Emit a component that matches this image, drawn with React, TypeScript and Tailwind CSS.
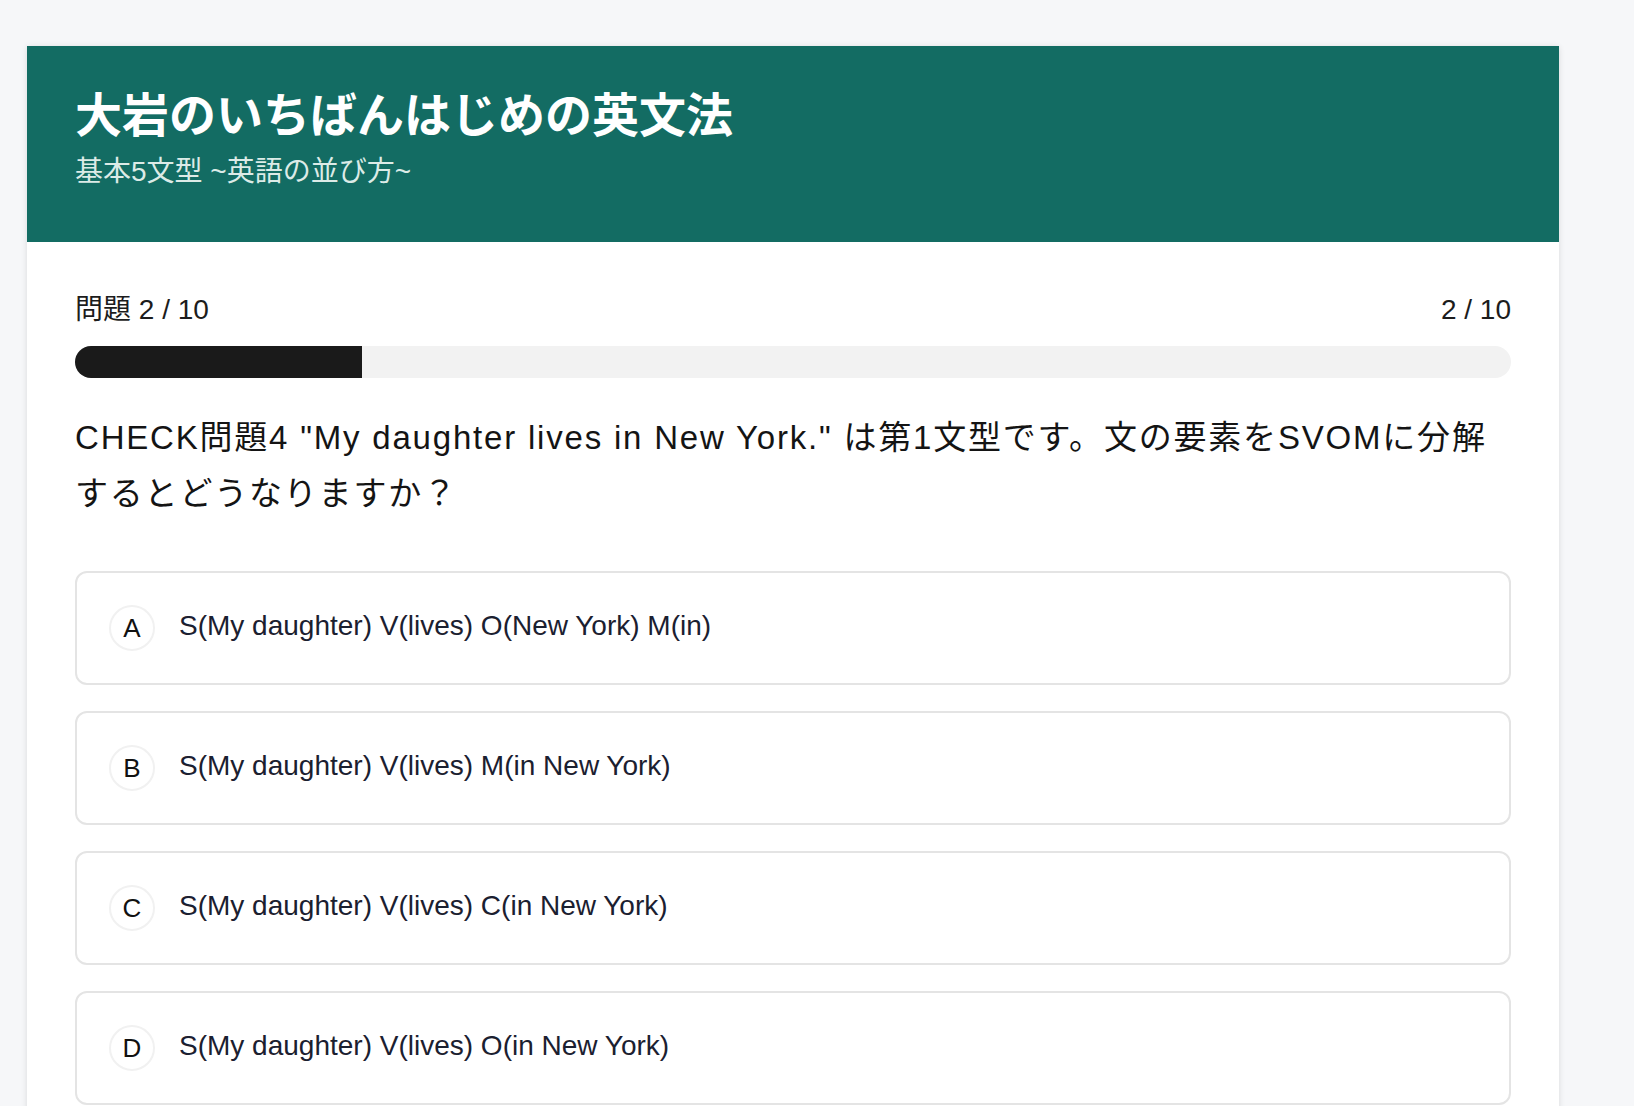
const options = [
  { key: "A", text: "S(My daughter) V(lives) O(New York) M(in)" },
  { key: "B", text: "S(My daughter) V(lives) M(in New York)" },
  { key: "C", text: "S(My daughter) V(lives) C(in New York)" },
  { key: "D", text: "S(My daughter) V(lives) O(in New York)" },
];

const current = 2;
const total = 10;

export default function App() {
  return (
    <div
      className="min-h-screen bg-[#f6f7f9] pt-[46px] pb-20"
      style={{ fontFamily: '"Liberation Sans", "Noto Sans CJK JP", sans-serif' }}
    >
      <div className="ml-[27px] w-[1532px] bg-white shadow-[0_1px_6px_rgba(0,0,0,0.12)]">
        {/* ヘッダー */}
        <header className="h-[196px] bg-[#136c63] px-12 pt-10">
          <h1 className="text-[47px] font-bold leading-[60px] text-white">
            大岩のいちばんはじめの英文法
          </h1>
          <p className="mt-1.5 text-[28px] leading-[40px] text-[#dcebe7]">
            基本5文型 ~英語の並び方~
          </p>
        </header>

        <main className="px-12 pt-[47px] pb-24">
          {/* 進捗 */}
          <div className="flex items-center justify-between text-[28px] leading-[42px] text-[#1c1c1c]">
            <span>問題 {current} / {total}</span>
            <span>{current} / {total}</span>
          </div>
          <div className="mt-[15px] h-8 w-full overflow-hidden rounded-full bg-[#f2f2f2]">
            <div
              className="h-full bg-[#1a1a1a]"
              style={{ width: `${(current / total) * 100}%` }}
            />
          </div>

          {/* 問題文 */}
          <p className="mt-8 text-[33px] leading-[56px] tracking-[1.8px] text-[#141414]">
            CHECK問題4 "My daughter lives in New York." は第1文型です。文の要素をSVOMに分解するとどうなりますか？
          </p>

          {/* 選択肢 */}
          <div className="mt-[49px] flex flex-col gap-[26px]">
            {options.map((opt) => (
              <button
                key={opt.key}
                className="flex items-center gap-6 rounded-xl border-2 border-[#e4e4e4] bg-white px-8 py-8 text-left"
              >
                <span className="flex h-[46px] w-[46px] shrink-0 items-center justify-center rounded-full border-2 border-[#f1f1f1] text-[26px] text-[#111]">
                  {opt.key}
                </span>
                <span className="-mt-1 text-[28px] text-[#1b2030]">{opt.text}</span>
              </button>
            ))}
          </div>
        </main>
      </div>
    </div>
  );
}
